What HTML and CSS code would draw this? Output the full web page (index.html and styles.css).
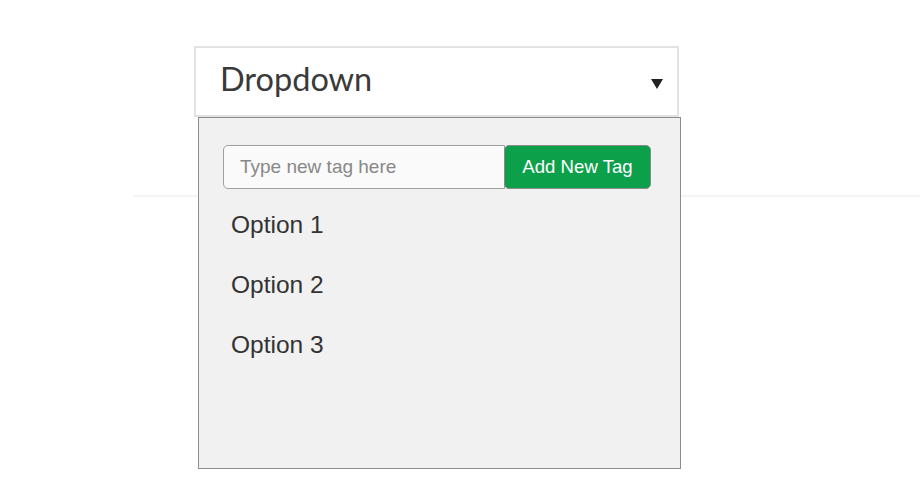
FILE: index.html
```html
<!DOCTYPE html>
<html>
<head>
<meta charset="utf-8">
<link rel="stylesheet" href="styles.css">
</head>
<body>
<div class="page">
  <div class="dropdown">
    <div class="dropdown-toggle">
      <span class="dropdown-label">Dropdown</span>
      <span class="caret"></span>
    </div>
    <div class="dropdown-menu">
      <div class="tag-group">
        <input class="tag-input" type="text" placeholder="Type new tag here">
        <button class="tag-button" type="button">Add New Tag</button>
      </div>
      <ul class="options">
        <li class="option">Option 1</li>
        <li class="option">Option 2</li>
        <li class="option">Option 3</li>
      </ul>
    </div>
  </div>
  <div class="divider"></div>
</div>
</body>
</html>
```

FILE: styles.css
```css
html, body {
  margin: 0;
  padding: 0;
  background: #ffffff;
}

body {
  min-height: 480px;
}

.page {
  padding-top: 46px;
  min-height: 434px;
}

.dropdown {
  position: relative;
  margin-left: 194px;
  width: 485px;
}

.dropdown-toggle {
  box-sizing: border-box;
  height: 71px;
  border: 2px solid #e2e2e2;
  display: flex;
  align-items: center;
  justify-content: space-between;
  padding: 0 14px 0 24px;
  background: #fff;
}

.dropdown-label {
  font-family: Lato, "Open Sans", sans-serif;
  font-size: 32.5px;
  color: #3a3a3a;
  margin-top: -6px;
}

.caret {
  width: 0;
  height: 0;
  border-left: 6px solid transparent;
  border-right: 6px solid transparent;
  border-top: 10px solid #222;
  margin-top: 4px;
}

.dropdown-menu {
  position: absolute;
  top: 71px;
  left: 4px;
  box-sizing: border-box;
  width: 483px;
  height: 352px;
  border: 1px solid #8c8c8c;
  background: #f1f1f1;
  padding: 27px 29px 0 24px;
  z-index: 2;
}

.tag-group {
  display: flex;
  height: 44px;
}

.tag-input {
  box-sizing: border-box;
  flex: 1;
  height: 44px;
  margin: 0;
  border: 1px solid #a0a0a0;
  border-radius: 5px 0 0 5px;
  background: #fafafa;
  padding: 0 16px;
  font-family: "Liberation Sans", Arial, sans-serif;
  font-size: 19px;
  color: #333;
  outline: none;
}

.tag-input::placeholder {
  color: #888;
}

.tag-button {
  box-sizing: border-box;
  width: 147px;
  height: 44px;
  margin: 0 0 0 -1px;
  border: 1px solid #8a8a8a;
  border-radius: 5px;
  background: #0da04b;
  color: #fff;
  font-family: "Liberation Sans", Arial, sans-serif;
  font-size: 18.6px;
  padding: 0;
  text-align: center;
}

.options {
  list-style: none;
  margin: 6px 0 0 0;
  padding: 0;
}

.option {
  height: 60px;
  line-height: 60px;
  padding-left: 8px;
  font-family: "Liberation Sans", Arial, sans-serif;
  font-size: 24.5px;
  color: #333;
}

.divider {
  margin-top: 78px;
  margin-left: 134px;
  height: 2px;
  background: #f4f4f4;
}
```
